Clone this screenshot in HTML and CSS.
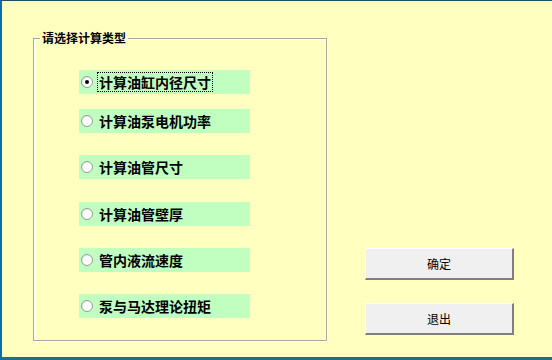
FILE: index.html
```html
<!DOCTYPE html>
<html>
<head>
<meta charset="utf-8">
<link rel="stylesheet" href="styles.css">
</head>
<body>
<div class="window">
  <div class="group">
    <div class="legend">请选择计算类型</div>
    <div class="row r1"><span class="radio checked"></span><span class="label focus">计算油缸内径尺寸</span></div>
    <div class="row r2"><span class="radio"></span><span class="label">计算油泵电机功率</span></div>
    <div class="row r3"><span class="radio"></span><span class="label">计算油管尺寸</span></div>
    <div class="row r4"><span class="radio"></span><span class="label">计算油管壁厚</span></div>
    <div class="row r5"><span class="radio"></span><span class="label">管内液流速度</span></div>
    <div class="row r6"><span class="radio"></span><span class="label">泵与马达理论扭矩</span></div>
  </div>
  <div class="buttons">
    <div class="btn">确定</div>
    <div class="btn second">退出</div>
  </div>
</div>
</body>
</html>
```
FILE: styles.css
```css
html, body {
  margin: 0;
  padding: 0;
}
body {
  width: 552px;
  height: 360px;
  overflow: hidden;
  background: #ffffc0;
  font-family: "Noto Sans CJK SC", "DejaVu Sans", sans-serif;
}
.window {
  box-sizing: border-box;
  width: 552px;
  height: 360px;
  border-left: 2px solid #0e6fa8;
  border-top: 1px solid #1d4e6a;
  border-bottom: 3px solid #1f6a98;
  display: flex;
  align-items: flex-start;
  padding: 37px 0 0 31px;
}
.group {
  position: relative;
  flex: none;
  align-self: flex-start;
  box-sizing: border-box;
  width: 294px;
  height: 303px;
  border: 1px solid #a8a8a8;
  box-shadow: inset 1px 1px 0 #ffffff, 1px 1px 0 #ffffff;
  padding: 31px 0 0 45px;
  display: flex;
  flex-direction: column;
}
.legend {
  position: absolute;
  left: 6px;
  top: -8px;
  padding: 0 2px;
  background: #ffffc0;
  font-size: 12px;
  font-weight: bold;
  line-height: 14px;
  color: #000;
}
.row {
  width: 171px;
  height: 24px;
  background: #c0ffc0;
  display: flex;
  align-items: center;
  flex-shrink: 0;
}
.r2 { margin-top: 15px; }
.r3 { margin-top: 22px; }
.r4 { margin-top: 23px; }
.r5 { margin-top: 22px; }
.r6 { margin-top: 22px; }
.radio {
  box-sizing: border-box;
  width: 12px;
  height: 12px;
  margin-left: 2px;
  margin-right: 4px;
  border-radius: 50%;
  border: 1px solid #9a9a9a;
  background: radial-gradient(circle at 60% 60%, #ffffff 45%, #d8d8d8 100%);
  position: relative;
  flex-shrink: 0;
}
.radio.checked::after {
  content: "";
  position: absolute;
  left: 3px;
  top: 3px;
  width: 4px;
  height: 4px;
  border-radius: 50%;
  background: #000;
}
.label {
  font-size: 14px;
  line-height: 18px;
  color: #000;
  font-weight: bold;
  padding: 0 1px;
  border: 1px dotted transparent;
}
.label.focus {
  border: 1px dotted #000;
}
.buttons {
  flex: none;
  margin-left: 38px;
  margin-top: 210px;
  display: flex;
  flex-direction: column;
  gap: 23px;
}
.btn {
  box-sizing: border-box;
  width: 149px;
  height: 32px;
  background: #f0f0f0;
  border-top: 1px solid #ffffff;
  border-left: 1px solid #ffffff;
  border-right: 2px solid #808080;
  border-bottom: 2px solid #808080;
  font-size: 12px;
  color: #000;
  display: flex;
  align-items: center;
  justify-content: center;
}
```
